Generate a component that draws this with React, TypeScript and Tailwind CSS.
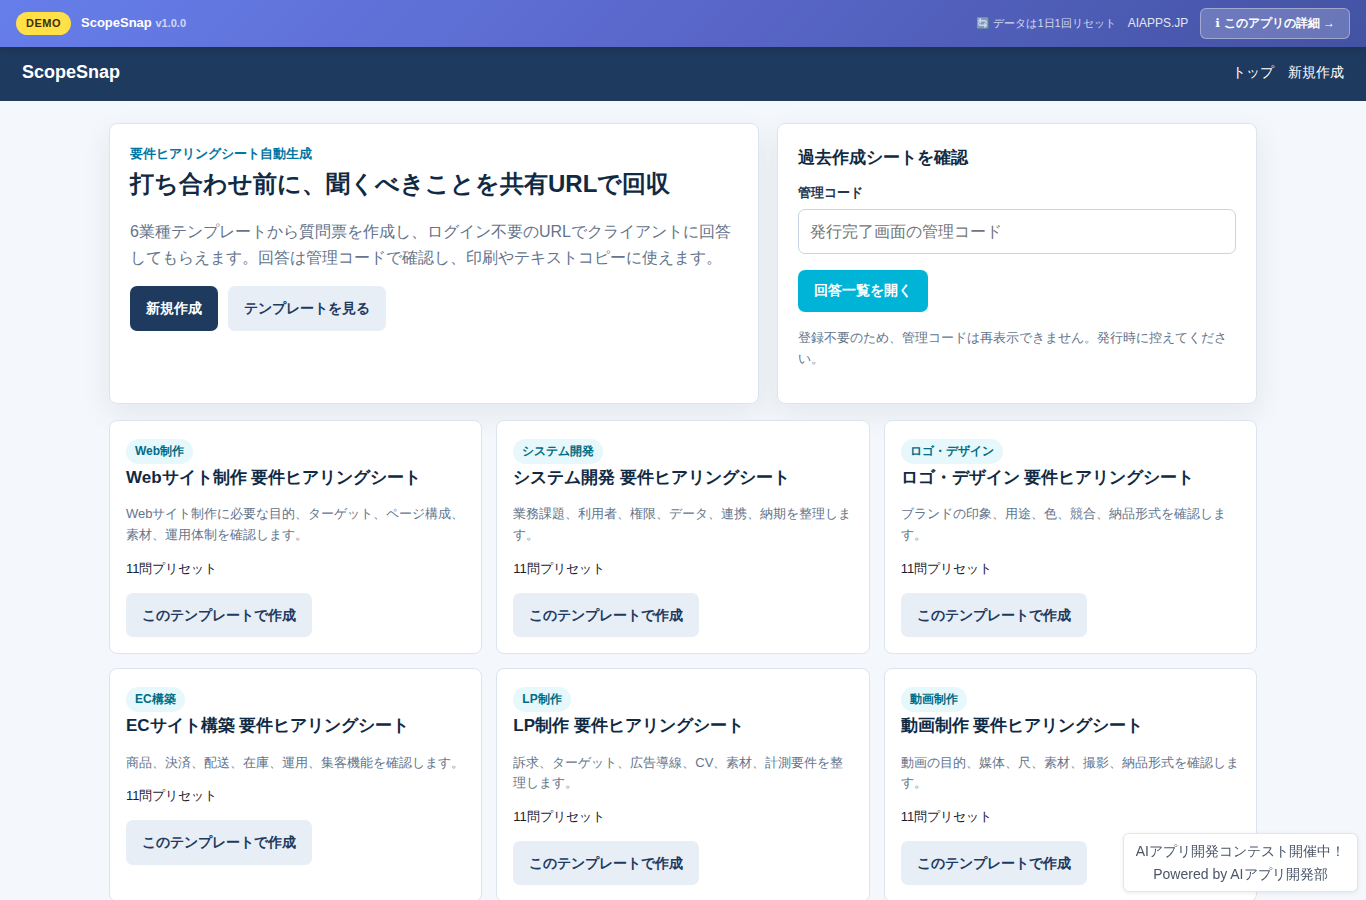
import { useState } from 'react';

interface Template {
    category: string;
    title: string;
    description: string;
    questions: number;
}

const templates: Template[] = [
    {
        category: 'Web制作',
        title: 'Webサイト制作 要件ヒアリングシート',
        description: 'Webサイト制作に必要な目的、ターゲット、ページ構成、素材、運用体制を確認します。',
        questions: 11,
    },
    {
        category: 'システム開発',
        title: 'システム開発 要件ヒアリングシート',
        description: '業務課題、利用者、権限、データ、連携、納期を整理します。',
        questions: 11,
    },
    {
        category: 'ロゴ・デザイン',
        title: 'ロゴ・デザイン 要件ヒアリングシート',
        description: 'ブランドの印象、用途、色、競合、納品形式を確認します。',
        questions: 11,
    },
    {
        category: 'EC構築',
        title: 'ECサイト構築 要件ヒアリングシート',
        description: '商品、決済、配送、在庫、運用、集客機能を確認します。',
        questions: 11,
    },
    {
        category: 'LP制作',
        title: 'LP制作 要件ヒアリングシート',
        description: '訴求、ターゲット、広告導線、CV、素材、計測要件を整理します。',
        questions: 11,
    },
    {
        category: '動画制作',
        title: '動画制作 要件ヒアリングシート',
        description: '動画の目的、媒体、尺、素材、撮影、納品形式を確認します。',
        questions: 11,
    },
];

function DemoBar() {
    return (
        <div className="sticky top-0 z-50 flex h-[47px] items-center justify-between bg-[linear-gradient(135deg,#667eea_0%,#5a67ca_50%,#4353a3_100%)] px-4 text-white shadow-[0_2px_8px_rgba(0,0,0,0.15)]">
            <div className="flex items-center gap-2.5">
                <span className="flex h-[23px] items-center rounded-full bg-[#ffe047] px-2.5 text-[11px] font-bold tracking-[0.5px] text-[#422d06]">
                    DEMO
                </span>
                <span className="pb-0.5 text-[13px] font-bold leading-5">
                    ScopeSnap <span className="text-[11px] opacity-70">v1.0.0</span>
                </span>
            </div>
            <div className="flex items-center gap-3">
                <span className="text-[11px] opacity-75">🔄 データは1日1回リセット</span>
                <a href="#" className="pb-0.5 text-xs opacity-85">AIAPPS.JP</a>
                <a
                    href="#"
                    className="flex h-[31px] items-center whitespace-pre rounded-md border border-white/35 bg-white/20 px-3.5 pb-px text-xs font-bold"
                >
                    <span className="mr-[0.4px] font-['DejaVu_Sans']">ℹ</span>
                    <span> このアプリの詳細 →</span>
                </a>
            </div>
        </div>
    );
}

function TemplateCard({ template }: { template: Template }) {
    return (
        <article className="rounded-lg border border-[#dce5ef] bg-white p-4">
            <div className="flex h-[27.4px] items-end pb-[0.4px]">
                <span className="flex h-[25px] items-center rounded-full bg-[#e6f8fc] px-[9px] text-xs font-bold text-[#006d86]">
                    {template.category}
                </span>
            </div>
            <h2 className="text-[17px] font-bold leading-[1.6] text-[#102a43]">{template.title}</h2>
            <p className="my-[13px] text-[13px] leading-[1.6] text-[#64748b]">{template.description}</p>
            <p className="mb-[13px] text-[13px] leading-[1.6]">{`${template.questions}問プリセット`}</p>
            <a
                href="#"
                className="inline-block rounded-[7px] bg-[#e7eef6] px-4 py-[11px] align-top text-sm font-bold leading-[1.6] text-[#1f3a5f]"
            >
                このテンプレートで作成
            </a>
        </article>
    );
}

export default function App() {
    const [code, setCode] = useState('');

    return (
        <div className="min-h-screen bg-[#f4f7fb] font-['Liberation_Sans',sans-serif] text-base leading-[1.6] text-[#172033]">
            <DemoBar />
            <header className="flex h-[54px] items-center justify-between bg-[#1f3a5f] px-[22px] pb-1 text-white">
                <a href="#" className="text-lg font-bold">ScopeSnap</a>
                <nav className="flex gap-3.5 text-sm">
                    <a href="#">トップ</a>
                    <a href="#">新規作成</a>
                </nav>
            </header>

            <main className="mx-auto max-w-[1180px] px-4 pb-12 pt-[22px]">
                <section className="mb-4 grid grid-cols-[650px_480px] gap-[18px]">
                    <div className="rounded-lg border border-[#dce5ef] bg-white p-5 shadow-[0_10px_30px_rgba(31,58,95,0.08)]">
                        <p className="text-[13px] font-bold leading-[1.6] text-[#0077a3]">要件ヒアリングシート自動生成</p>
                        <h1 className="mb-4 text-2xl font-bold leading-[1.6] text-[#102a43]">
                            打ち合わせ前に、聞くべきことを共有URLで回収
                        </h1>
                        <p className="mb-4 text-[#64748b]">
                            6業種テンプレートから質問票を作成し、ログイン不要のURLでクライアントに回答してもらえます。回答は管理コードで確認し、印刷やテキストコピーに使えます。
                        </p>
                        <div className="flex gap-2.5 text-sm font-bold leading-[1.6]">
                            <a href="#" className="rounded-[7px] bg-[#1f3a5f] px-4 py-[11px] text-white">新規作成</a>
                            <a href="#" className="rounded-[7px] bg-[#e7eef6] px-4 py-[11px] text-[#1f3a5f]">テンプレートを見る</a>
                        </div>
                    </div>

                    <div className="rounded-lg border border-[#dce5ef] bg-white p-5 shadow-[0_10px_30px_rgba(31,58,95,0.08)]">
                        <h2 className="mb-3 text-[17px] font-bold leading-[1.6] text-[#102a43]">過去作成シートを確認</h2>
                        <label htmlFor="code" className="mb-[5px] block text-[13px] font-bold leading-[1.6] text-[#24364d]">
                            管理コード
                        </label>
                        <input
                            id="code"
                            value={code}
                            onChange={(e) => setCode(e.target.value)}
                            placeholder="発行完了画面の管理コード"
                            className="block h-[45px] w-full rounded-[7px] border border-[#c8d4e3] bg-white px-[11px] pt-px placeholder:text-[#757575]"
                        />
                        <button className="mt-4 block h-[42px] rounded-[7px] bg-[#00b4d8] px-4 pb-0.5 text-sm font-bold text-white">
                            回答一覧を開く
                        </button>
                        <p className="mb-[13px] mt-4 text-[13px] leading-[1.6] text-[#64748b]">
                            登録不要のため、管理コードは再表示できません。発行時に控えてください。
                        </p>
                    </div>
                </section>

                <section className="grid grid-cols-3 gap-3.5">
                    {templates.map((template) => (
                        <TemplateCard key={template.category} template={template} />
                    ))}
                </section>
            </main>

            <aside className="fixed bottom-2 right-2 z-40 rounded-md border border-black/10 bg-white/95 px-3 py-1.5 text-center text-sm leading-[1.6] text-[#4a5568] shadow-[0_1px_4px_rgba(0,0,0,0.08)]">
                <div>AIアプリ開発コンテスト開催中！</div>
                <div>Powered by AIアプリ開発部</div>
            </aside>
        </div>
    );
}
